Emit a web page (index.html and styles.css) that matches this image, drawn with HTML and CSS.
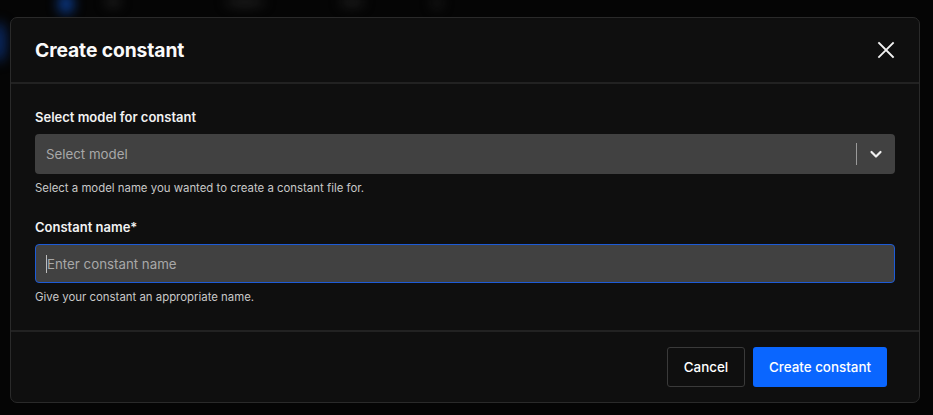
FILE: index.html
```html
<!DOCTYPE html>
<html>
<head>
<meta charset="utf-8">
<link rel="stylesheet" href="styles.css">
</head>
<body>
<div class="backdrop">
  <div class="blur blur-blue"></div>
  <div class="blur blur-side"></div>
  <div class="blur blur-g1"></div>
  <div class="blur blur-g2"></div>
  <div class="blur blur-g3"></div>
  <div class="blur blur-g4"></div>
</div>
<div class="modal">
  <div class="modal-header">
    <h2 class="title">Create constant</h2>
    <button class="close" aria-label="Close">
      <svg width="18" height="18" viewBox="0 0 18 18"><path d="M2 2L16 16M16 2L2 16" stroke="#f2f2f2" stroke-width="1.8" stroke-linecap="square"/></svg>
    </button>
  </div>
  <div class="modal-body">
    <div class="field">
      <label class="label">Select model for constant</label>
      <div class="select">
        <span class="placeholder">Select model</span>
        <span class="sep"></span>
        <svg class="chev" width="14" height="14" viewBox="0 0 14 14"><path d="M2.5 5L7 9.5L11.5 5" stroke="#f0f0f0" stroke-width="2.2" fill="none" stroke-linecap="round" stroke-linejoin="round"/></svg>
      </div>
      <p class="help">Select a model name you wanted to create a constant file for.</p>
    </div>
    <div class="field">
      <label class="label">Constant name*</label>
      <div class="input"><span class="caret"></span><span class="placeholder">Enter constant name</span></div>
      <p class="help">Give your constant an appropriate name.</p>
    </div>
  </div>
  <div class="modal-footer">
    <button class="btn btn-cancel">Cancel</button>
    <button class="btn btn-primary">Create constant</button>
  </div>
</div>
</body>
</html>
```
FILE: styles.css
```css
* { box-sizing: border-box; }
html, body { margin: 0; padding: 0; }
body {
  width: 933px;
  height: 415px;
  background: #050505;
  font-family: Inter, "Liberation Sans", sans-serif;
  color: #f2f2f2;
  overflow: hidden;
  position: relative;
  padding: 17px 13px 0 10px;
}
.backdrop { position: absolute; inset: 0; overflow: hidden; }
.blur { position: absolute; filter: blur(6px); border-radius: 50%; }
.blur-blue { left: 58px; top: -6px; width: 16px; height: 20px; background: #0b3a8a; }
.blur-side { left: -8px; top: 22px; width: 14px; height: 40px; background: #0a2a66; }
.blur-g1 { left: 105px; top: -2px; width: 16px; height: 8px; background: #262626; }
.blur-g2 { left: 225px; top: -2px; width: 40px; height: 8px; background: #222; }
.blur-g3 { left: 340px; top: -2px; width: 24px; height: 8px; background: #222; }
.blur-g4 { left: 432px; top: -2px; width: 10px; height: 10px; background: #1e1e1e; }

.modal {
  position: relative;
  width: 910px;
  height: 386px;
  background: #0f0f0f;
  border: 1px solid #2a2a2a;
  border-radius: 7px;
  display: flex;
  flex-direction: column;
}
.modal-header {
  height: 66px;
  flex: none;
  border-bottom: 2px solid #222;
  display: flex;
  align-items: center;
  justify-content: space-between;
  padding: 0 24px 0 24px;
}
.title {
  margin: 0;
  font-size: 19.3px;
  font-weight: 700;
  color: #fafafa;
  letter-spacing: -0.1px;
}
.close {
  background: none;
  border: 0;
  padding: 0;
  width: 18px;
  height: 18px;
  display: flex;
  margin-right: 0;
}
.modal-body {
  flex: 1;
  padding: 23px 24px 0 24px;
  border-bottom: 2px solid #222;
}
.field { display: flex; flex-direction: column; margin-bottom: 22px; }
.label {
  font-size: 13px;
  font-weight: 600;
  line-height: 20px;
  color: #f2f2f2;
  margin-bottom: 7px;
}
.select, .input {
  height: 40px;
  border-radius: 4px;
  background: #414141;
  display: flex;
  align-items: center;
  padding: 0 11px;
}
.placeholder { font-size: 13.3px; color: #a8a8a8; flex: 1; }
.sep { width: 1px; height: 22px; background: #9a9a9a; margin-right: 12px; }
.chev { margin-right: 1px; }
.input { border: 1.5px solid #1d5bd6; padding-left: 10px; height: 39px; }
.caret { width: 1px; height: 18px; background: #bdbdbd; margin-right: 0; }
.help {
  margin: 7px 0 0 0;
  font-size: 11.4px;
  color: #c8c8c8;
  line-height: 14px;
}
.modal-footer {
  height: 70px;
  flex: none;
  display: flex;
  justify-content: flex-end;
  align-items: center;
  gap: 8px;
  padding: 0 32px 0 0;
}
.btn {
  height: 40px;
  font-family: Inter, "Liberation Sans", sans-serif;
  font-size: 13.4px;
  font-weight: 500;
  border-radius: 3px;
  color: #fff;
  cursor: pointer;
}
.btn-cancel {
  width: 78px;
  background: #0f0f0f;
  border: 1px solid #3a3a3a;
}
.btn-primary {
  width: 134px;
  background: #0a66ff;
  border: 0;
}
```
